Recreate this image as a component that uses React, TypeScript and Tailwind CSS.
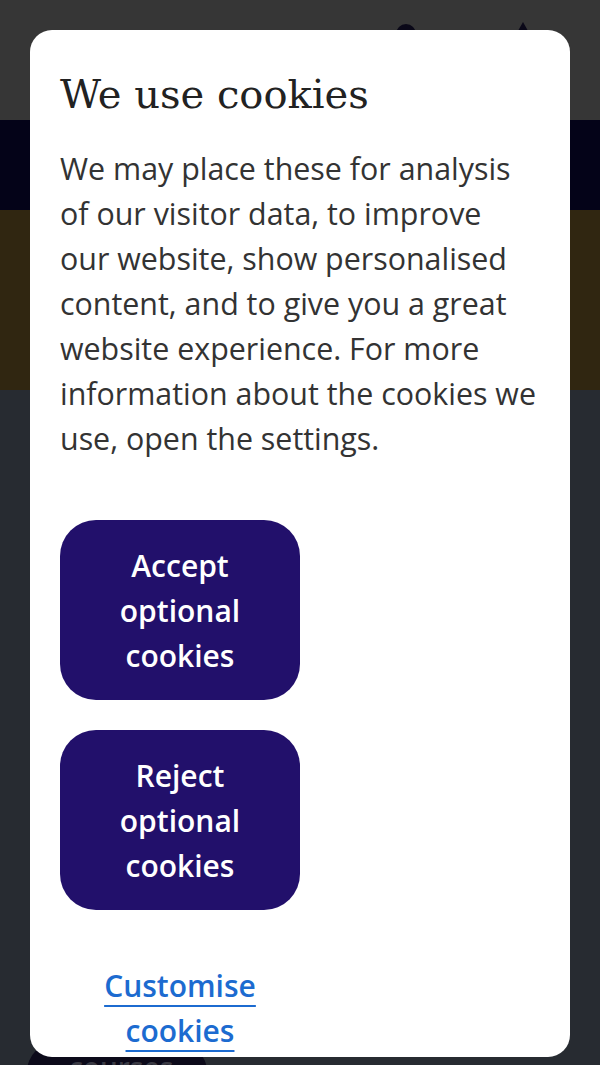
import React from "react";

const CookieButton = ({ label }: { label: string }) => (
  <button className="flex h-[180px] w-[240px] items-center justify-center rounded-[36px] bg-[#22106b] px-6 text-center text-[30px] font-semibold leading-[45px] text-white">
    {label}
  </button>
);

const App = () => {
  return (
    <div className="relative h-[1065px] w-[600px] overflow-hidden font-['Open_Sans',sans-serif]">
      {/* page behind the overlay */}
      <div className="flex h-full flex-col">
        <header className="relative h-[120px] shrink-0 bg-[#363636]">
          <div className="absolute left-[396px] top-[24px] h-[20px] w-[20px] rounded-full bg-[#0a0818]" />
          <div className="absolute left-[514px] top-[22px] h-0 w-0 border-x-[9px] border-b-[16px] border-x-transparent border-b-[#0a0818]" />
        </header>
        <div className="h-[90px] shrink-0 bg-[#040318]" />
        <div className="h-[180px] shrink-0 bg-[#302611]" />
        <div className="flex-1 bg-[#272b31] px-[27px] pt-[652px]">
          <div className="h-[60px] w-[180px] rounded-[30px] bg-[#0c0a1a] pl-[42px] pt-[4px] text-[28px] font-semibold text-[#3a3a44]">
            courses
          </div>
        </div>
      </div>

      {/* cookie dialog */}
      <div className="absolute left-[30px] top-[30px] h-[1027px] w-[540px] overflow-hidden rounded-[22px] bg-white px-[30px] pt-[36px]">
        <h2 className="font-['DejaVu_Serif',serif] text-[40px] leading-[56px] text-[#222]">
          We use cookies
        </h2>
        <p className="mt-[24px] w-[477px] text-[30.4px] leading-[45px] text-[#333]">
          We may place these for analysis of our visitor data, to improve our website, show personalised content, and to give you a great website experience. For more information about the cookies we use, open the settings.
        </p>
        <div className="mt-[59px] flex flex-col gap-[30px]">
          <CookieButton label="Accept optional cookies" />
          <CookieButton label="Reject optional cookies" />
        </div>
        <div className="mt-[53px] w-[240px] text-center">
          <a
            href="#"
            className="text-[30px] font-semibold leading-[45px] text-[#1c6bd0] underline decoration-[2px] underline-offset-[8px]"
          >
            Customise cookies
          </a>
        </div>
      </div>
    </div>
  );
};

export default App;
